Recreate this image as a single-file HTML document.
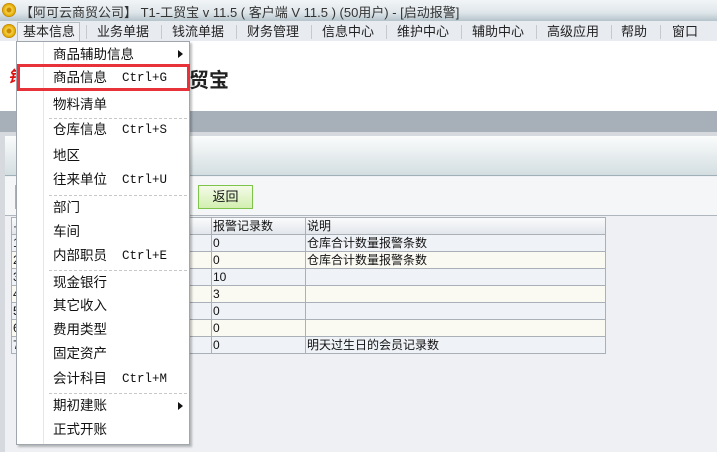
<!DOCTYPE html>
<html><head><meta charset="utf-8"><style>
*{margin:0;padding:0;box-sizing:border-box}
body{width:717px;height:452px;overflow:hidden;position:relative;background:#eef0f3;font-family:"Liberation Sans","Noto Sans CJK SC","WenQuanYi Zen Hei",sans-serif;font-size:13px;color:#111}
.a{position:absolute;white-space:nowrap}
.coin{position:absolute;width:14px;height:14px;border-radius:50%;background:radial-gradient(circle,#c98a00 0 2px,#f7d24a 3px,#e0a800 6px,#b07400 7px)}
.mi{position:absolute;top:3px;height:16px;line-height:16px;font-size:13px;color:#222;white-space:nowrap}
.sep{position:absolute;top:4px;width:1px;height:14px;background:#c6cad0}
td{border:1px solid #a9b0b8;height:17px;padding:0 1px;font-size:12px;line-height:15px;white-space:nowrap}
.it{position:absolute;left:36px;font-size:13.5px;line-height:16px;white-space:nowrap}
.sc{position:absolute;left:105px;font-family:"Liberation Mono",monospace;font-size:12.5px;line-height:16px;white-space:nowrap}
.ms{position:absolute;left:32px;width:138px;border-top:1px dashed #c8c8c8}
</style></head><body>
<div class="a" style="left:0;top:0;width:717px;height:21px;background:linear-gradient(#f2f5f7,#dfe6ea 60%,#b5c3cb)"></div>
<div class="coin" style="left:2px;top:3px"></div>
<div class="a" style="left:20px;top:2px;font-size:13px;color:#333">【阿可云商贸公司】 T1-工贸宝 v 11.5 ( 客户端 V 11.5 ) (50用户) - [启动报警]</div>
<div class="a" style="left:0;top:21px;width:717px;height:20px;background:#e8ebf0"></div>
<div class="coin" style="left:2px;top:24px"></div>
<div class="a" style="left:17px;top:22px;width:63px;height:19px;border:1px solid #b8bec6;border-bottom:none;background:#eef0f3"></div>
<div style="position:absolute;top:21px;left:0">
<span class="mi" style="left:23px">基本信息</span>
<span class="sep" style="left:86px"></span><span class="mi" style="left:97px">业务单据</span>
<span class="sep" style="left:161px"></span><span class="mi" style="left:172px">钱流单据</span>
<span class="sep" style="left:236px"></span><span class="mi" style="left:247px">财务管理</span>
<span class="sep" style="left:311px"></span><span class="mi" style="left:322px">信息中心</span>
<span class="sep" style="left:386px"></span><span class="mi" style="left:397px">维护中心</span>
<span class="sep" style="left:461px"></span><span class="mi" style="left:472px">辅助中心</span>
<span class="sep" style="left:536px"></span><span class="mi" style="left:547px">高级应用</span>
<span class="sep" style="left:611px"></span><span class="mi" style="left:621px">帮助</span>
<span class="sep" style="left:660px"></span><span class="mi" style="left:672px">窗口</span>
</div>
<div class="a" style="left:0;top:41px;width:717px;height:70px;background:#fff"></div>
<div class="a" style="left:8px;top:63px;color:#d11;font-weight:bold;font-style:italic;font-size:16px">钟</div>
<div class="a" style="left:189px;top:64px;color:#222;font-weight:bold;font-size:20px">贸宝</div>
<div class="a" style="left:0;top:111px;width:717px;height:21px;background:#a7b0b8"></div>
<div class="a" style="left:0;top:132px;width:717px;height:4px;background:#d6dadf"></div>
<div class="a" style="left:0;top:132px;width:5px;height:320px;background:#d6dadf"></div>
<div class="a" style="left:5px;top:136px;width:712px;height:40px;background:linear-gradient(#fbfcfc,#d4dee1);border-bottom:1px solid #9fb0b8"></div>
<div class="a" style="left:5px;top:177px;width:712px;height:39px;background:#f5f6f8;border-bottom:1px solid #b0b6bd"></div>
<div class="a" style="left:15px;top:185px;width:3px;height:24px;background:#8fd05c"></div>
<div class="a" style="left:198px;top:185px;width:55px;height:24px;border:1px solid #7ec44a;background:linear-gradient(#f4fbe9,#d3efb0);text-align:center;line-height:22px;font-size:13px">返回</div>
<table class="a" style="left:11px;top:217px;border-collapse:collapse;background:#eff2f7">
<tr style="background:linear-gradient(#fafbfc,#e1e5ea)"><td style="width:200px">·</td><td style="width:94px">报警记录数</td><td style="width:300px">说明</td></tr>
<tr><td>1</td><td>0</td><td>仓库合计数量报警条数</td></tr>
<tr style="background:#fbfaf2"><td>2</td><td>0</td><td>仓库合计数量报警条数</td></tr>
<tr><td>3</td><td>10</td><td></td></tr>
<tr style="background:#fbfaf2"><td>4</td><td>3</td><td></td></tr>
<tr><td>5</td><td>0</td><td></td></tr>
<tr style="background:#fbfaf2"><td>6</td><td>0</td><td></td></tr>
<tr><td>7</td><td>0</td><td>明天过生日的会员记录数</td></tr>
</table>
<div class="a" style="left:16px;top:41px;width:174px;height:404px;background:#fff;border:1px solid #a0a6ad;box-shadow:2px 2px 2px rgba(0,0,0,.25)">
<div class="a" style="left:26px;top:0;width:1px;height:402px;background:#e4e6e9"></div>
<div class="it" style="top:5px">商品辅助信息</div><div class="a" style="left:161px;top:8px;border-left:5px solid #111;border-top:4px solid transparent;border-bottom:4px solid transparent"></div>
<div class="a" style="left:0;top:22px;width:173px;height:27px;border:3px solid #e8323a"></div>
<div class="it" style="top:28px">商品信息</div><div class="sc" style="top:28px">Ctrl+G</div>
<div class="it" style="top:55px">物料清单</div>
<div class="ms" style="top:76px"></div>
<div class="it" style="top:80px">仓库信息</div><div class="sc" style="top:80px">Ctrl+S</div>
<div class="it" style="top:106px">地区</div>
<div class="it" style="top:130px">往来单位</div><div class="sc" style="top:130px">Ctrl+U</div>
<div class="ms" style="top:153px"></div>
<div class="it" style="top:158px">部门</div>
<div class="it" style="top:182px">车间</div>
<div class="it" style="top:206px">内部职员</div><div class="sc" style="top:206px">Ctrl+E</div>
<div class="ms" style="top:228px"></div>
<div class="it" style="top:233px">现金银行</div>
<div class="it" style="top:256px">其它收入</div>
<div class="it" style="top:280px">费用类型</div>
<div class="it" style="top:304px">固定资产</div>
<div class="it" style="top:329px">会计科目</div><div class="sc" style="top:329px">Ctrl+M</div>
<div class="ms" style="top:351px"></div>
<div class="it" style="top:356px">期初建账</div><div class="a" style="left:161px;top:360px;border-left:5px solid #111;border-top:4px solid transparent;border-bottom:4px solid transparent"></div>
<div class="it" style="top:380px">正式开账</div>
</div>
</body></html>
